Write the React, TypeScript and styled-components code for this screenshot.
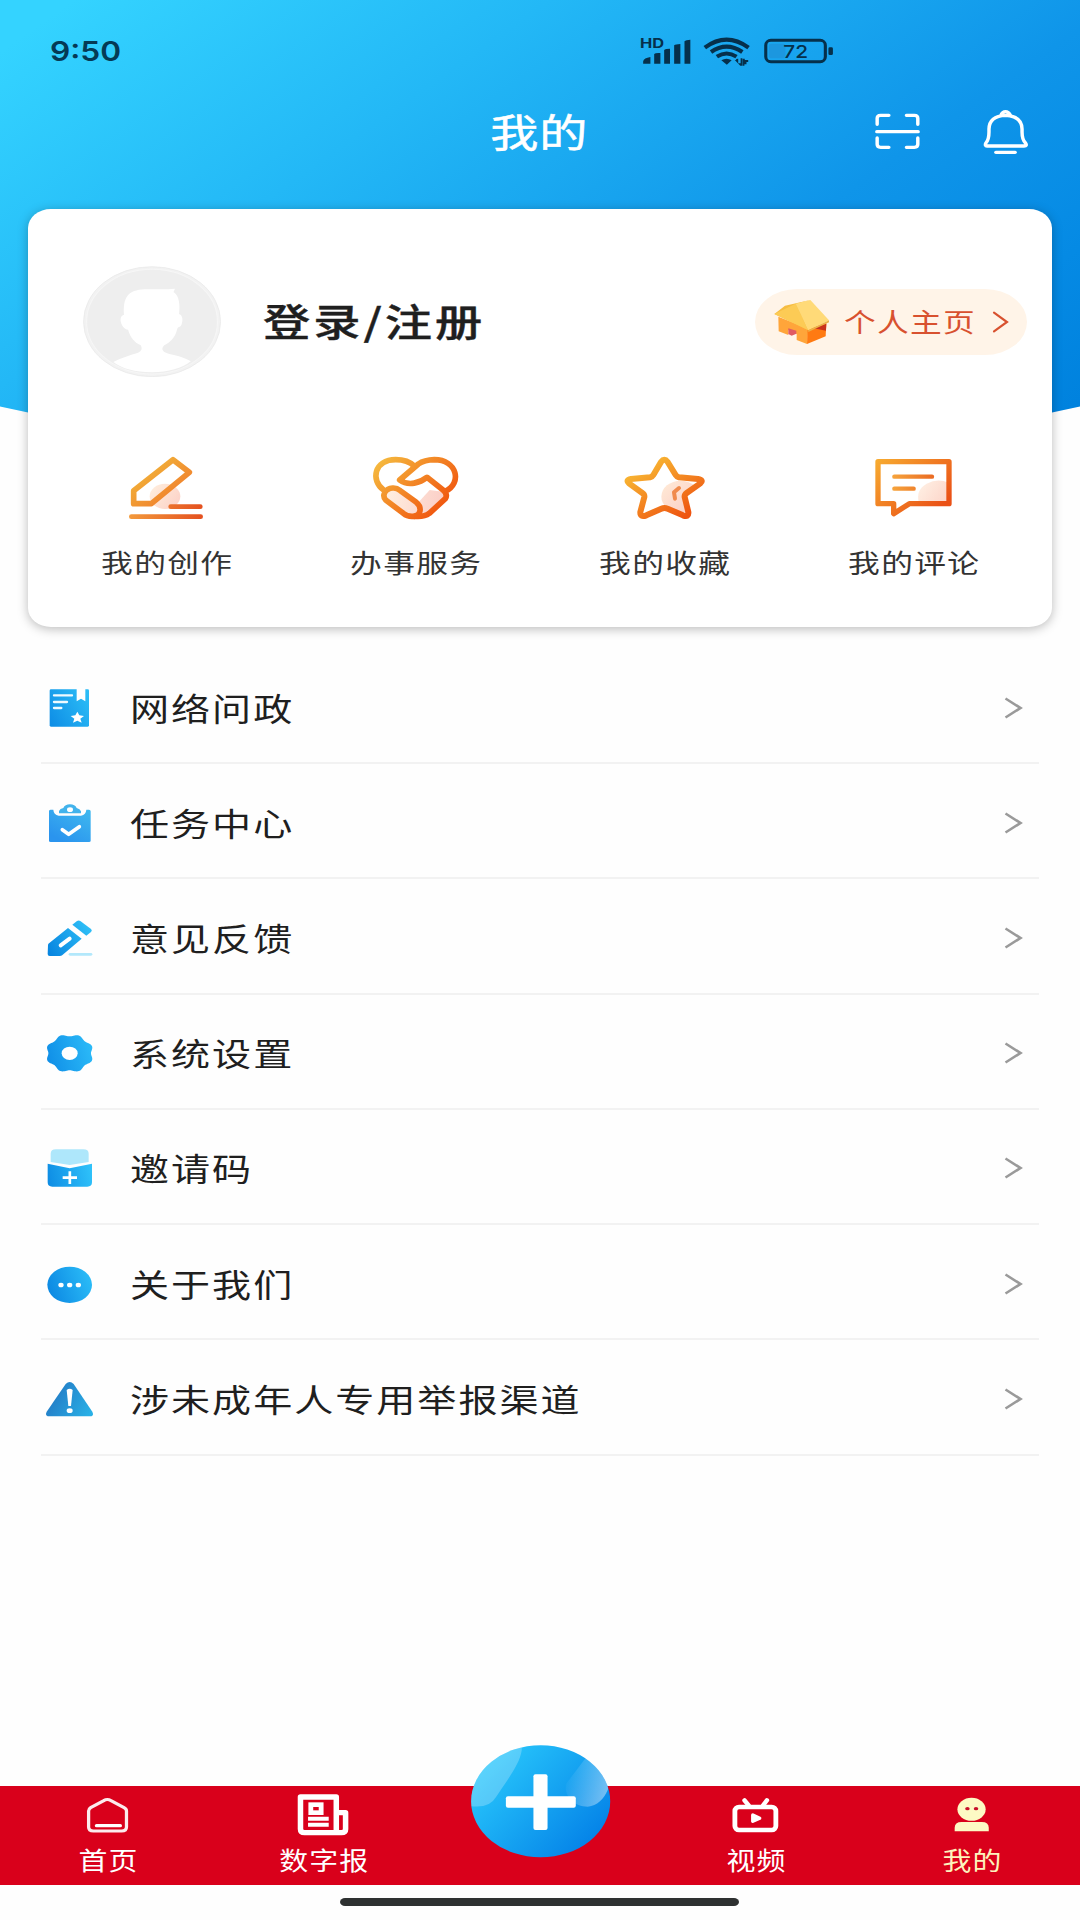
import React from "react";
import styled, { createGlobalStyle } from "styled-components";

const GlobalStyle = createGlobalStyle`
  body { margin: 0; background: #fdfdfd; }
  * { box-sizing: border-box; }
`;

const Screen = styled.div`
  width: 1080px;
  height: 1920px;
  display: flex;
  flex-direction: column;
  overflow: hidden;
  background: #fefefe;
  font-family: "Noto Sans CJK SC", sans-serif;
`;

const Hero = styled.header`
  height: 530px;
  flex: none;
  background: linear-gradient(145deg, #34d3ff 4%, #23b8f6 30%, #0f95e9 61%, #058ae4 78%, #0082de 90%);
  clip-path: polygon(0 0, 100% 0, 100% 406.5px, 50% 522px, 0 406.5px);
`;

const StatusBar = styled.div`
  height: 84px;
  padding: 19px 244px 0 50px;
  display: flex;
  align-items: center;
  justify-content: space-between;
`;

/* Wide lettering: glyphs are stretched horizontally around their own box. */
const Wide = styled.span<{
  $size: number;
  $pitch?: number;
  $stretch?: number;
  $color: string;
  $weight?: number;
  $origin?: string;
  $stroke?: number;
}>`
  display: inline-block;
  white-space: nowrap;
  font-size: ${(p) => p.$size}px;
  line-height: ${(p) => p.$size * 1.4}px;
  letter-spacing: ${(p) => (p.$pitch ? p.$pitch / (p.$stretch ?? 1.22) - p.$size : 0)}px;
  margin-right: ${(p) => (p.$pitch ? p.$size - p.$pitch / (p.$stretch ?? 1.22) : 0)}px;
  color: ${(p) => p.$color};
  font-weight: ${(p) => p.$weight ?? 400};
  transform: scaleX(${(p) => p.$stretch ?? 1.22});
  transform-origin: ${(p) => p.$origin ?? "center"} center;
  -webkit-text-stroke: ${(p) => p.$stroke ?? 0}px ${(p) => p.$color};
`;

const Clock = styled(Wide)`
  font-family: Inter, sans-serif;
`;

const TitleBar = styled.div`
  height: 97px;
  padding: 0 48px;
  display: grid;
  grid-template-columns: 1fr auto 1fr;
  align-items: center;
`;

const Actions = styled.div`
  grid-column: 3;
  display: flex;
  justify-content: flex-end;
  align-items: center;
  gap: 55px;
`;

const TitleSlot = styled.div`
  grid-column: 2;
  margin: -4px 1px 0 -1px;
`;

const Drawing = styled.svg`
  display: block;
  flex: none;
`;

const Card = styled.section`
  position: relative;
  margin: -321px 28px 0;
  height: 418px;
  flex: none;
  border-radius: 23px / 19px;
  background: #fff;
  box-shadow: 0 2px 11px rgba(0, 0, 0, 0.27);
`;

const Profile = styled.div`
  height: 225px;
  padding: 0 25px 0 55px;
  display: flex;
  align-items: center;
`;

const LoginText = styled.div`
  margin: -3px auto 0 42px;
`;

const HomePill = styled.div`
  width: 272px;
  height: 66px;
  padding: 0 17px 0 17px;
  border-radius: 42px / 33px;
  background: #fff4e8;
  display: flex;
  align-items: center;
  justify-content: space-between;
`;

const PillText = styled.div`
  margin-right: 4px;
`;

const Shortcuts = styled.div`
  padding: 20px 14px 0;
  display: grid;
  grid-template-columns: repeat(4, 1fr);
`;

const Shortcut = styled.div`
  display: flex;
  flex-direction: column;
  align-items: center;
  gap: 22px;
`;

const Menu = styled.ul`
  list-style: none;
  margin: 22px 41px 0;
  padding: 0;
  height: 806.5px;
  flex: none;
  display: flex;
  flex-direction: column;
`;

const MenuRow = styled.li`
  flex: 1;
  padding: 2px 16px 0 0;
  border-bottom: 2px solid #f2f2f2;
  display: flex;
  align-items: center;
`;

const MenuLabel = styled.div`
  margin: 0 auto 0 29px;
`;

const Nav = styled.nav`
  margin-top: auto;
  height: 99px;
  flex: none;
  background: #d9001b;
  display: grid;
  grid-template-columns: repeat(5, 1fr);
`;

const NavItem = styled.div<{ $raised?: boolean }>`
  display: flex;
  flex-direction: column;
  align-items: center;
  padding-top: 6px;
  gap: 6px;
  margin-top: ${(p) => (p.$raised ? -50 : 0)}px;
`;

const HomeArea = styled.div`
  height: 35px;
  flex: none;
  padding: 13px 2px 0 0;
  display: flex;
  justify-content: center;
`;

const HomeBar = styled.div`
  width: 399px;
  height: 8px;
  border-radius: 5px / 4px;
  background: #2e3131;
`;

const FINE = 1568 / 540;

function Icon({
  box,
  unit = 3,
  children,
}: {
  box: [number, number, number, number];
  unit?: number;
  children: React.ReactNode;
}) {
  return (
    <Drawing viewBox={box.join(" ")} width={box[2] / unit} height={box[3] / 3} fill="none" preserveAspectRatio="none">
      {children}
    </Drawing>
  );
}

function Grad({ id, x1, y1, x2, y2, from, to }: { id: string; x1: number; y1: number; x2: number; y2: number; from: string; to: string }) {
  return (
    <linearGradient id={id} gradientUnits="userSpaceOnUse" x1={x1} y1={y1} x2={x2} y2={y2}>
      <stop offset="0" stopColor={from} />
      <stop offset="1" stopColor={to} />
    </linearGradient>
  );
}

const StatusIcons = () => (
  <Icon box={[285, 105, 575, 100]} unit={FINE}>
    <g fill="#06304b">
      <text x="291" y="144" fontFamily="Inter, sans-serif" fontWeight="700" fontSize="38" textLength="70" lengthAdjust="spacingAndGlyphs">
        HD
      </text>
      <path d="M300 184Q302 174 321 171V191H300ZM332 162Q335 158 350 159V191H332ZM361 150Q364 146 378 146V191H361ZM390 136Q394 133 408 132V191H390ZM420 124Q424 119 437 119V191H420Z" />
      <path d="M527 181Q542 172 557 181L543 194ZM566 180H570V177L576 176V190H583V175H588V197H582ZM589 176H595V180H605V186H600V193H594V197H589Z" />
    </g>
    <g stroke="#06304b" strokeWidth="12">
      <path d="M479 143Q542 95 606 143M497 156Q542 124 588 156M514 170Q542 151 571 170" />
      <rect x="656" y="121" width="173" height="64" rx="15" strokeWidth="9" />
    </g>
    <rect x="665" y="131" width="48" height="44" rx="6" fill="#1c97df" />
    <rect x="838" y="142" width="13" height="23" rx="4" fill="#06304b" />
    <text x="707" y="174" fill="#06304b" fontFamily="Inter, sans-serif" fontWeight="500" fontSize="52" textLength="72" lengthAdjust="spacingAndGlyphs">
      72
    </text>
  </Icon>
);

const ScanIcon = () => (
  <Icon box={[965, 325, 150, 145]} unit={FINE}>
    <path
      d="M980 374V356Q980 347 990 347H1014M1065 347H1088Q1098 347 1098 356V374M980 415V434Q980 443 990 443H1014M1065 443H1088Q1098 443 1098 434V415M979 396H1099"
      stroke="#fff"
      strokeWidth="10"
      strokeLinecap="round"
    />
  </Icon>
);

const BellIcon = () => (
  <Icon box={[1275, 320, 155, 155]} unit={FINE}>
    <path
      d="M1298 437Q1291 437 1295 428Q1304 418 1304 395V386Q1305 347 1352 345Q1399 347 1400 386V395Q1400 418 1410 428Q1416 437 1406 437ZM1338 346Q1343 334 1352 334Q1361 334 1367 346"
      stroke="#fff"
      strokeWidth="10"
      strokeLinejoin="round"
    />
    <path d="M1324 456H1380" stroke="#fff" strokeWidth="10" strokeLinecap="round" />
  </Icon>
);

const Avatar = () => (
  <Icon box={[241, 198, 401, 334]} unit={FINE}>
    <ellipse cx="441.500" cy="365" rx="199" ry="165" fill="#f2f2f2" stroke="#e8e8e8" strokeWidth="2" />
    <ellipse cx="441.500" cy="365" rx="190" ry="157" fill="#eeeeee" stroke="#f6f6f6" strokeWidth="3" />
    <path
      fill="#fff"
      d="M360 344C357 293 371 270 420 268H488L508 266L504 276C521 287 523 316 520 342C532 347 531 363 527 374C522 385 517 376 514 389C508 415 492 428 477 436C465 448 474 458 492 462C518 467 541 476 554 484Q515 516 441 517Q367 516 329 486C350 474 377 466 399 459C414 454 413 442 408 435C390 427 378 412 372 389C360 389 351 374 350 360Q350 347 360 344Z"
    />
  </Icon>
);

const HouseIcon = () => (
  <Icon box={[155, 294, 177, 144]}>
    <path d="M174 350L264 386L260 432L229 420V402L204 390V405L175 394Z" fill="#ffa53a" />
    <path d="M262 387L318 369L316 409L260 432Z" fill="#ff7a12" />
    <path d="M280 385L318 371L317 392Z" fill="#c9321b" />
    <path d="M204 385L228 392V401L214 407L204 402Z" fill="#e05a62" />
    <path d="M162 342L194 317L270 300L232 312L264 391Z" fill="#f6bd42" />
    <path d="M162 342L226 311L264 391Z" fill="#fccb55" />
    <path d="M226 311L270 300L326 361L264 391Z" fill="#ffda78" />
    <path d="M264 391L326 361V367L264 396Z" fill="#eab34a" />
  </Icon>
);

const PillChevron = () => (
  <Icon box={[814, 330, 56, 72]}>
    <path d="M823 338L862 366L823 394" stroke="#d8512f" strokeWidth="6.5" strokeLinecap="round" />
  </Icon>
);

const RowChevron = () => (
  <Drawing viewBox="0 0 20 24" width="20" height="24" fill="none">
    <path d="M2.500 3.500L17.500 13L2.500 22.500" stroke="#9a9a9a" strokeWidth="2.600" />
  </Drawing>
);

const CreateIcon = () => (
  <Icon box={[187, 72, 270, 204]}>
    <defs>
      <Grad id="pen" x1={230} y1={90} x2={350} y2={240} from="#f2bf3c" to="#f0742a" />
      <Grad id="penBase" x1={208} y1={0} x2={430} y2={0} from="#f39a3c" to="#e4501f" />
      <Grad id="penDot" x1={270} y1={170} x2={350} y2={230} from="#ffeedd" to="#fcd3c8" />
    </defs>
    <ellipse cx="316" cy="199" rx="46" ry="38" fill="url(#penDot)" />
    <path d="M340 89L389 127L275 221H222V182Z" stroke="url(#pen)" strokeWidth="17" strokeLinejoin="round" />
    <path d="M333 230H422M215 260H423" stroke="url(#penBase)" strokeWidth="14" strokeLinecap="round" />
  </Icon>
);

const ServiceIcon = () => (
  <Icon box={[934, 72, 270, 204]}>
    <defs>
      <Grad id="hands" x1={970} y1={80} x2={1140} y2={250} from="#f5b93e" to="#f0540e" />
      <Grad id="handsFill" x1={980} y1={180} x2={1140} y2={220} from="#ffefe0" to="#fbd0c8" />
    </defs>
    <path d="M1078 215L1110 180L1155 186L1160 200L1110 250L1082 258Z" fill="url(#handsFill)" />
    <path
      d="M978 210C966 196 976 176 999 174Q1011 173 1022 182L1070 217C1087 231 1085 256 1062 259Q1044 261 1031 250Z"
      fill="url(#handsFill)"
    />
    <g stroke="url(#hands)" strokeWidth="17" strokeLinejoin="round" strokeLinecap="round">
      <path d="M978 210C966 196 976 176 999 174Q1011 173 1022 182L1070 217C1087 231 1085 256 1062 259Q1044 261 1031 250Z" />
      <path d="M972 180C932 151 943 89 1008 89Q1044 89 1065 109" />
      <path d="M1157 184C1208 160 1193 89 1124 89Q1094 90 1076 102L1020 150C1047 170 1082 158 1102 142L1151 181Q1165 193 1157 206L1109 250Q1093 262 1064 259" />
    </g>
  </Icon>
);

const StarIcon = () => (
  <Icon box={[120, 72, 270, 204]}>
    <defs>
      <Grad id="star" x1={190} y1={80} x2={310} y2={265} from="#f9bf35" to="#ee5310" />
      <Grad id="starDot" x1={250} y1={160} x2={320} y2={240} from="#ffe9d6" to="#fbd2c8" />
      <clipPath id="starClip">
        <path d="M253 92L286 142L362 156L312 194L326 258L253 232L182 258L196 194L144 156L222 142Z" />
      </clipPath>
    </defs>
    <ellipse cx="302" cy="200" rx="58" ry="48" fill="url(#starDot)" clipPath="url(#starClip)" />
    <path
      d="M243 96Q253 83 263 96L287 135Q290 140 297 142L354 147Q372 150 361 160L320 189Q313 194 314 201L325 246Q327 263 309 256L263 236Q253 232 244 236L199 256Q180 263 181 246L193 201Q194 194 187 189L147 160Q136 150 153 147L210 142Q217 140 220 135Z"
      stroke="url(#star)"
      strokeWidth="18"
      strokeLinejoin="round"
    />
    <path d="M297 174L282 187L285 206" stroke="#f08a4c" strokeWidth="12" strokeLinecap="round" strokeLinejoin="round" />
  </Icon>
);

const CommentIcon = () => (
  <Icon box={[867, 72, 270, 204]}>
    <defs>
      <Grad id="talk" x1={900} y1={80} x2={1060} y2={250} from="#f7ab30" to="#ea5116" />
      <Grad id="talkLine" x1={937} y1={0} x2={1062} y2={0} from="#f6a43c" to="#ea6a22" />
      <Grad id="talkDot" x1={1020} y1={155} x2={1105} y2={215} from="#fff0e4" to="#fcd4c8" />
    </defs>
    <path d="M1017 218Q1006 180 1040 161Q1073 143 1106 158V218Z" fill="url(#talkDot)" />
    <path d="M894 95H1107V221H988L941 251V221H894Z" stroke="url(#talk)" strokeWidth="16" strokeLinejoin="round" />
    <path d="M943 140H1056.01M943 176.010H1001" stroke="url(#talkLine)" strokeWidth="13" strokeLinecap="round" />
  </Icon>
);

const BookIcon = () => (
  <Icon box={[123, 50, 180, 180]}>
    <defs>
      <Grad id="book" x1={149} y1={180} x2={267} y2={110} from="#0f8fe6" to="#2bbcf6" />
    </defs>
    <rect x="149" y="87" width="118" height="112" rx="4" fill="url(#book)" />
    <path d="M230 86V123L243 115L256 123V86Z" fill="#fff" />
    <path d="M162 105H216M162 125H201M162 143H184" stroke="#eefaff" strokeWidth="7" strokeLinecap="round" />
    <path d="M232 154L238 165L252 167L241 175L245 187L232 181L219 187L223 175L212 167L226 165Z" fill="#fff" />
  </Icon>
);

const TaskIcon = () => (
  <Icon box={[123, 395, 180, 180]}>
    <defs>
      <Grad id="task" x1={250} y1={440} x2={190} y2={545} from="#3fb8ef" to="#2a94ee" />
    </defs>
    <path d="M147 452Q148 448 152 448H160Q161 463 176 466H243Q258 463 259 448H267Q272 448 272 453V541Q272 545 267 545H152Q147 545 147 541Z" fill="url(#task)" />
    <path d="M177 459V452Q180 445 190 443Q195 432 210 432Q225 432 230 443Q240 445 243 453V459Z" fill="#42b3ec" />
    <ellipse cx="210" cy="448" rx="9" ry="7" fill="#fff" />
    <path d="M187 508L206 522L238 499" stroke="#fff" strokeWidth="11" strokeLinecap="round" strokeLinejoin="round" />
  </Icon>
);

const FeedbackIcon = () => (
  <Icon box={[123, 741, 180, 180]}>
    <defs>
      <Grad id="fb" x1={145} y1={870} x2={262} y2={800} from="#0886e0" to="#2dbdf6" />
    </defs>
    <path d="M210 883H273" stroke="#b3e8fb" strokeWidth="8" strokeLinecap="round" />
    <path d="M144 855Q144 851 149 848L204 804L245 836L190 883Q186 888 180 888H149Q143 888 143 882Z" fill="url(#fb)" />
    <path d="M217 794L231 783Q236 780 241 783L273 807Q278 811 273 816L259 827Z" fill="url(#fb)" />
    <path d="M182 856L209 836" stroke="#fff" strokeWidth="12" strokeLinecap="round" />
  </Icon>
);

const gearOutline = Array.from({ length: 144 }, (_, i) => {
  const t = (i / 144) * Math.PI * 2;
  const r = 1.015 - 0.062 * Math.cos(8 * t);
  return `${i ? "L" : "M"}${(209 + 67 * r * Math.sin(t)).toFixed(1)} ${(220 - 53.5 * r * Math.cos(t)).toFixed(1)}`;
}).join("");

const GearIcon = () => (
  <Icon box={[123, 126, 180, 180]}>
    <defs>
      <Grad id="gear" x1={142} y1={240} x2={276} y2={200} from="#108fe7" to="#2bbaf8" />
    </defs>
    <path d={`${gearOutline}Z`} fill="url(#gear)" />
    <ellipse cx="209" cy="220" rx="24" ry="20" fill="#fff" />
  </Icon>
);

const InviteIcon = () => (
  <Icon box={[123, 471, 180, 180]}>
    <defs>
      <Grad id="inv" x1={143} y1={600} x2={276} y2={570} from="#0e8de4" to="#2fc2fa" />
    </defs>
    <path d="M152 521Q152 508 168 508H250Q266 508 266 521V546L209 555L152 546Z" fill="#aee7fb" />
    <path d="M143 551L209 565L276 551V607Q276 620 262 620H157Q143 620 143 607Z" fill="url(#inv)" />
    <path d="M188 593H231M209.500 574V612" stroke="#fff" strokeWidth="8" />
  </Icon>
);

const AboutIcon = () => (
  <Icon box={[123, 816, 180, 180]}>
    <defs>
      <Grad id="about" x1={143} y1={940} x2={276} y2={890} from="#0b87e2" to="#2bbdf8" />
    </defs>
    <ellipse cx="209" cy="911.500" rx="67" ry="54.500" fill="url(#about)" />
    <g fill="#fff">
      <ellipse cx="183" cy="912" rx="8" ry="7" />
      <ellipse cx="209" cy="912" rx="8" ry="7" />
      <ellipse cx="235" cy="912" rx="8" ry="7" />
    </g>
  </Icon>
);

const WarnIcon = () => (
  <Icon box={[123, 1162, 180, 180]}>
    <defs>
      <Grad id="warn" x1={150} y1={1230} x2={270} y2={1300} from="#2379c4" to="#29b0e6" />
    </defs>
    <path d="M197 1210Q209 1198 221 1210L277 1293Q284 1307 268 1307H150Q133 1307 140 1293Z" fill="url(#warn)" />
    <path d="M200 1228Q209 1221 218 1228L213 1276H205Z" fill="#fff" />
    <ellipse cx="209" cy="1290" rx="9" ry="7" fill="#fff" />
  </Icon>
);

const NavHomeIcon = () => (
  <Icon box={[234, 215, 160, 135]} unit={FINE}>
    <path d="M303 241Q313 234 324 241L362 262Q369 266 369 272V320Q369 332 355 332H273Q259 332 259 320V272Q259 266 265 262Z" stroke="#fff" strokeWidth="9.5" strokeOpacity=".92" />
    <path d="M282 316H351" stroke="#fff" strokeWidth="10" strokeLinecap="round" />
  </Icon>
);

const NavPaperIcon = () => (
  <Icon box={[861, 215, 160, 135]} unit={FINE}>
    <path d="M886 230H978V337H886Q874 337 874 326V230ZM978 277H1005V327Q1005 337 993 337H978" stroke="#fff" strokeWidth="16" strokeLinejoin="round" />
    <rect x="904" y="253" width="30" height="24" stroke="#fff" strokeWidth="14" />
    <path d="M896 295H956M896 313H956" stroke="#fff" strokeWidth="12" />
  </Icon>
);

const NavVideoIcon = () => (
  <Icon box={[547, 215, 160, 135]} unit={FINE}>
    <rect x="567" y="260" width="119" height="69" rx="12" stroke="#fff" strokeWidth="14" />
    <path d="M595 240L607 255M660 240L649 255" stroke="#fff" strokeWidth="13" strokeLinecap="round" />
    <path d="M619 284L639 294L619 303Z" fill="#fff" stroke="#fff" strokeWidth="10" strokeLinejoin="round" />
  </Icon>
);

const NavMeIcon = () => (
  <Icon box={[1174, 215, 160, 135]} unit={FINE}>
    <g fill="#fdfac4">
      <ellipse cx="1254" cy="267" rx="41" ry="34.500" />
      <path d="M1205 322Q1205 305 1225 305H1284Q1304 305 1304 322V333H1205Z" />
    </g>
    <ellipse cx="1242" cy="265" rx="6.500" ry="5" fill="#c8102a" />
    <ellipse cx="1267" cy="265" rx="6.500" ry="5" fill="#c8102a" />
  </Icon>
);

const PlusBall = () => (
  <Icon box={[1360, 65, 420, 355]} unit={FINE}>
    <defs>
      <Grad id="ball" x1={1430} y1={120} x2={1710} y2={370} from="#27c5fb" to="#0584e8" />
      <linearGradient id="shine" gradientUnits="userSpaceOnUse" x1="1650" y1="170" x2="1765" y2="200">
        <stop offset="0" stopColor="#fff" stopOpacity="0.03" />
        <stop offset="1" stopColor="#fff" stopOpacity="0.42" />
      </linearGradient>
      <clipPath id="ballClip">
        <ellipse cx="1571" cy="243" rx="202" ry="168" />
      </clipPath>
    </defs>
    <ellipse cx="1571" cy="243" rx="202" ry="168" fill="url(#ball)" />
    <g clipPath="url(#ballClip)">
      <path d="M1516 60V90C1511 132 1470 185 1442 229Q1420 268 1360 256V60Z" fill="#fff" fillOpacity="0.24" />
      <path d="M1700 115L1646 189C1636 218 1660 258 1708 259Q1748 253 1766 208L1790 100Z" fill="url(#shine)" />
    </g>
    <rect x="1470" y="228" width="203" height="34" rx="6" fill="#fff" />
    <rect x="1550" y="162" width="41" height="167" rx="6" fill="#fff" />
  </Icon>
);

const shortcuts = [
  { label: "我的创作", Art: CreateIcon },
  { label: "办事服务", Art: ServiceIcon },
  { label: "我的收藏", Art: StarIcon },
  { label: "我的评论", Art: CommentIcon },
];

const menu = [
  { label: "网络问政", Art: BookIcon },
  { label: "任务中心", Art: TaskIcon },
  { label: "意见反馈", Art: FeedbackIcon },
  { label: "系统设置", Art: GearIcon },
  { label: "邀请码", Art: InviteIcon },
  { label: "关于我们", Art: AboutIcon },
  { label: "涉未成年人专用举报渠道", Art: WarnIcon },
];

const tabs = [
  { label: "首页", Art: NavHomeIcon, color: "#fff" },
  { label: "数字报", Art: NavPaperIcon, color: "#fff" },
  { label: "", Art: PlusBall, color: "#fff" },
  { label: "视频", Art: NavVideoIcon, color: "#fff" },
  { label: "我的", Art: NavMeIcon, color: "#fdf3bd" },
];

export default function App() {
  return (
    <>
      <GlobalStyle />
      <Screen>
        <Hero>
          <StatusBar>
            <Clock $size={27.5} $stretch={1.15} $color="#053a55" $weight={600} $origin="left">
              9:50
            </Clock>
            <StatusIcons />
          </StatusBar>
          <TitleBar>
            <TitleSlot>
              <Wide $size={38.5} $pitch={49} $stretch={1.25} $color="#fff" $stroke={0.5}>
                我的
              </Wide>
            </TitleSlot>
            <Actions>
              <ScanIcon />
              <BellIcon />
            </Actions>
          </TitleBar>
        </Hero>
        <Card>
          <Profile>
            <Avatar />
            <LoginText>
              <Wide $size={37.5} $pitch={50.2} $stretch={1.26} $color="#1f1f1f" $weight={500} $origin="left" $stroke={0.4}>
                登录/注册
              </Wide>
            </LoginText>
            <HomePill>
              <HouseIcon />
              <PillText>
                <Wide $size={26} $pitch={33} $color="#d8512f">
                  个人主页
                </Wide>
              </PillText>
              <PillChevron />
            </HomePill>
          </Profile>
          <Shortcuts>
            {shortcuts.map(({ label, Art }) => (
              <Shortcut key={label}>
                <Art />
                <Wide $size={26} $pitch={33.1} $color="#333">
                  {label}
                </Wide>
              </Shortcut>
            ))}
          </Shortcuts>
        </Card>
        <Menu>
          {menu.map(({ label, Art }) => (
            <MenuRow key={label}>
              <Art />
              <MenuLabel>
                <Wide $size={31.5} $pitch={41.05} $stretch={1.24} $color="#1f1f1f" $origin="left">
                  {label}
                </Wide>
              </MenuLabel>
              <RowChevron />
            </MenuRow>
          ))}
        </Menu>
        <Nav>
          {tabs.map(({ label, Art, color }) => (
            <NavItem key={label} $raised={!label}>
              <Art />
              {label && (
                <Wide $size={24.5} $pitch={30} $stretch={1.18} $color={color}>
                  {label}
                </Wide>
              )}
            </NavItem>
          ))}
        </Nav>
        <HomeArea>
          <HomeBar />
        </HomeArea>
      </Screen>
    </>
  );
}
